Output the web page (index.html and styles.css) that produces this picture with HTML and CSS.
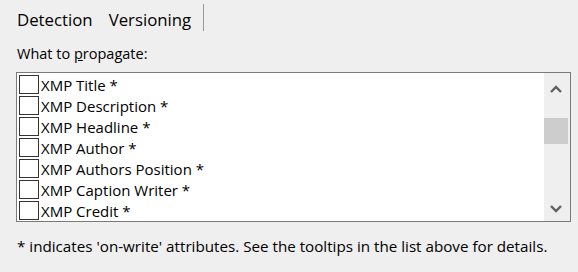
FILE: index.html
```html
<!DOCTYPE html>
<html>
<head>
<meta charset="utf-8">
<link rel="stylesheet" href="styles.css">
</head>
<body>
<div class="panel">
  <div class="tabs">
    <span class="tab">Detection</span>
    <span class="tab tab-active">Versioning</span>
  </div>
  <div class="label">What to <span class="accel">p</span>ropagate:</div>
  <div class="listbox">
    <div class="items">
      <div class="row"><span class="check"></span><span class="text">XMP Title *</span></div>
      <div class="row"><span class="check"></span><span class="text">XMP Description *</span></div>
      <div class="row"><span class="check"></span><span class="text">XMP Headline *</span></div>
      <div class="row"><span class="check"></span><span class="text">XMP Author *</span></div>
      <div class="row"><span class="check"></span><span class="text">XMP Authors Position *</span></div>
      <div class="row"><span class="check"></span><span class="text">XMP Caption Writer *</span></div>
      <div class="row"><span class="check"></span><span class="text">XMP Credit *</span></div>
    </div>
    <div class="scrollbar">
      <div class="sb-up">
        <svg width="12" height="8" viewBox="0 0 12 8"><path d="M1 7 L6 2 L11 7" fill="none" stroke="#606060" stroke-width="2.4"/></svg>
      </div>
      <div class="sb-thumb"></div>
      <div class="sb-space"></div>
      <div class="sb-down">
        <svg width="12" height="8" viewBox="0 0 12 8"><path d="M1 1 L6 6 L11 1" fill="none" stroke="#606060" stroke-width="2.4"/></svg>
      </div>
    </div>
  </div>
  <div class="footer">* indicates 'on-write' attributes. See the tooltips in the list above for details.</div>
</div>
</body>
</html>
```

FILE: styles.css
```css
html, body {
  margin: 0;
  padding: 0;
  background: #efefef;
}
.panel {
  width: 578px;
  height: 272px;
  font-family: "Open Sans", "Noto Sans", sans-serif;
  font-size: 15px;
  color: #000;
  overflow: hidden;
}
.tabs {
  display: flex;
  padding: 4px 0 0 17px;
  height: 27px;
}
.tab {
  font-size: 16.8px;
  padding-top: 5px;
  line-height: 22px;
  height: 22px;
}
.tab + .tab {
  margin-left: 16px;
}
.tab-active {
  padding-right: 12px;
  border-right: 1px solid #999;
}
.label {
  margin: 13px 0 0 17px;
  font-size: 14.5px;
  line-height: 20px;
}
.accel {
  text-decoration: underline;
}
.listbox {
  margin: 8px 0 0 16px;
  width: 555px;
  height: 150px;
  box-sizing: border-box;
  border: 1px solid #7a7a7a;
  background: #fff;
  display: flex;
}
.items {
  flex: 1;
  overflow: hidden;
}
.row {
  display: flex;
  align-items: flex-start;
  height: 21px;
}
.check {
  box-sizing: border-box;
  width: 20px;
  height: 19px;
  margin: 2px 2px 0 2px;
  border: 1px solid #333;
  background: #fff;
}
.text {
  margin-top: 2px;
  line-height: 21px;
  white-space: nowrap;
}
.scrollbar {
  width: 26px;
  background: #efefef;
  display: flex;
  flex-direction: column;
}
.sb-up {
  height: 32px;
  display: flex;
  align-items: center;
  justify-content: center;
  padding-right: 2px;
}
.sb-thumb {
  margin-top: 13px;
  width: 24px;
  height: 26px;
  background: #cdcdcd;
}
.sb-space {
  flex: 1;
}
.sb-down {
  height: 24px;
  display: flex;
  align-items: center;
  justify-content: center;
  padding-right: 2px;
}
.footer {
  margin: 14px 0 0 17px;
  font-size: 15.2px;
  line-height: 20px;
  white-space: nowrap;
}
```
